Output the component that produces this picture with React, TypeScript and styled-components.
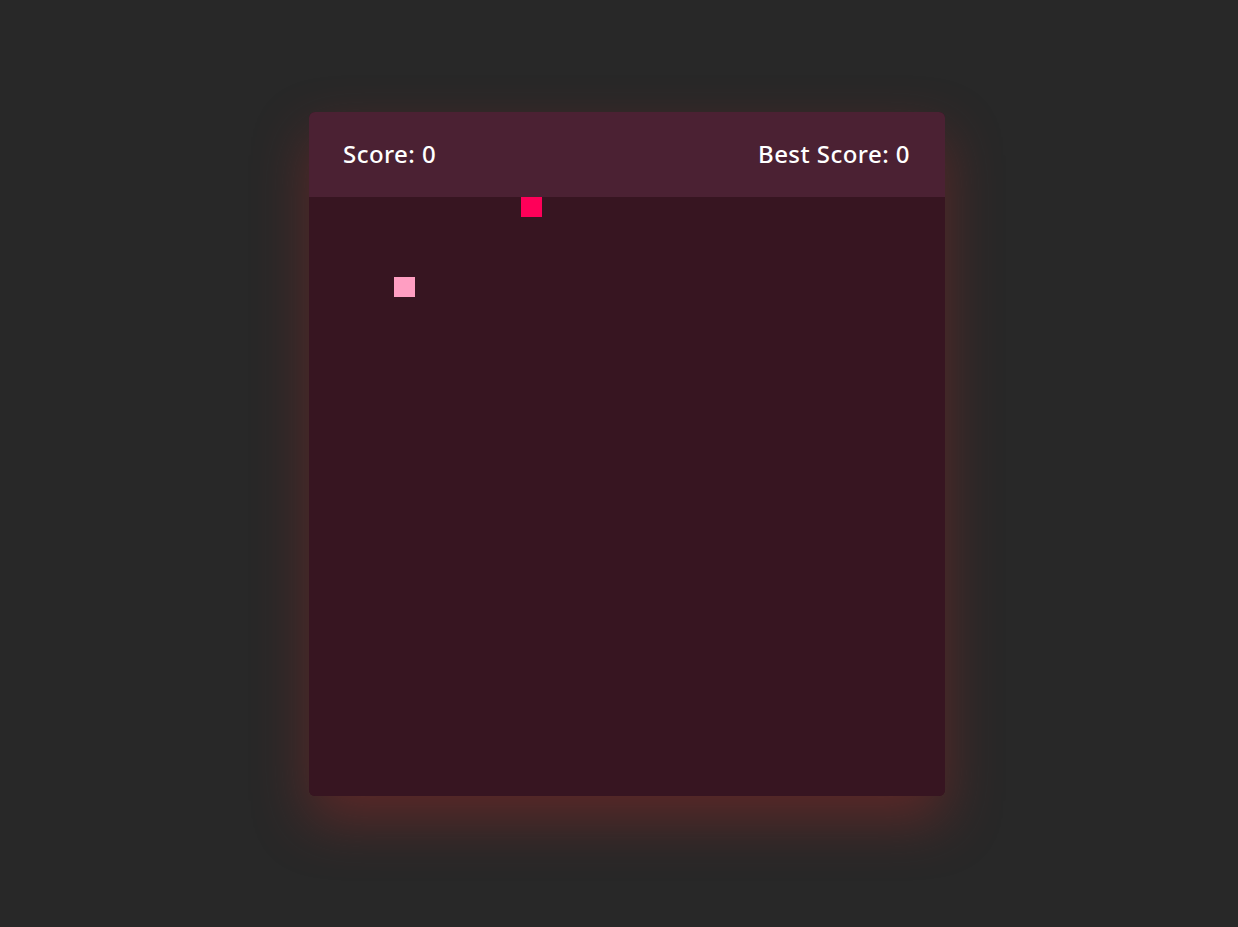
import React from "react";
import styled, { createGlobalStyle } from "styled-components";

const Global = createGlobalStyle`
  html, body {
    margin: 0;
    padding: 0;
    background: #282828;
    height: 100%;
  }
  #root { min-height: 100%; }
`;

const Page = styled.div`
  min-height: 927px;
  box-sizing: border-box;
  background: #282828;
  display: flex;
  justify-content: center;
  align-items: flex-start;
  padding: 112px 0 0 16px;
  font-family: "Noto Sans", "Open Sans", sans-serif;
`;

const Card = styled.div`
  width: 636px;
  height: 684px;
  border-radius: 6px;
  overflow: hidden;
  display: flex;
  flex-direction: column;
  background: #371521;
  box-shadow: 0 24px 55px rgba(150, 40, 40, 0.48);
`;

const Header = styled.div`
  height: 85px;
  flex: none;
  background: #4b2133;
  display: flex;
  align-items: center;
  justify-content: space-between;
  padding: 0 35px 0 34px;
  box-sizing: border-box;
`;

const Label = styled.span`
  color: #ffffff;
  font-size: 24px;
  font-weight: 500;
  letter-spacing: 0.45px;
  line-height: 1;
  margin-top: -2px;
`;

const Board = styled.div`
  position: relative;
  flex: 1;
  background: #371521;
`;

const Cell = styled.div<{ $color: string }>`
  position: absolute;
  width: 21px;
  height: 20px;
  background: ${(p) => p.$color};
`;

const COLS = 30;
const ROWS = 30;
const cellW = 636 / COLS;
const cellH = 600 / ROWS;

const items = [
  { x: 10, y: 0, color: "#ff0059" },
  { x: 4, y: 4, color: "#ff9ec2" },
];

export default function App() {
  return (
    <>
      <Global />
      <Page>
        <Card>
          <Header>
            <Label>Score: 0</Label>
            <Label>Best Score: 0</Label>
          </Header>
          <Board>
            {items.map((it, i) => (
              <Cell
                key={i}
                $color={it.color}
                style={{ left: Math.round(it.x * cellW), top: Math.round(it.y * cellH) }}
              />
            ))}
          </Board>
        </Card>
      </Page>
    </>
  );
}
